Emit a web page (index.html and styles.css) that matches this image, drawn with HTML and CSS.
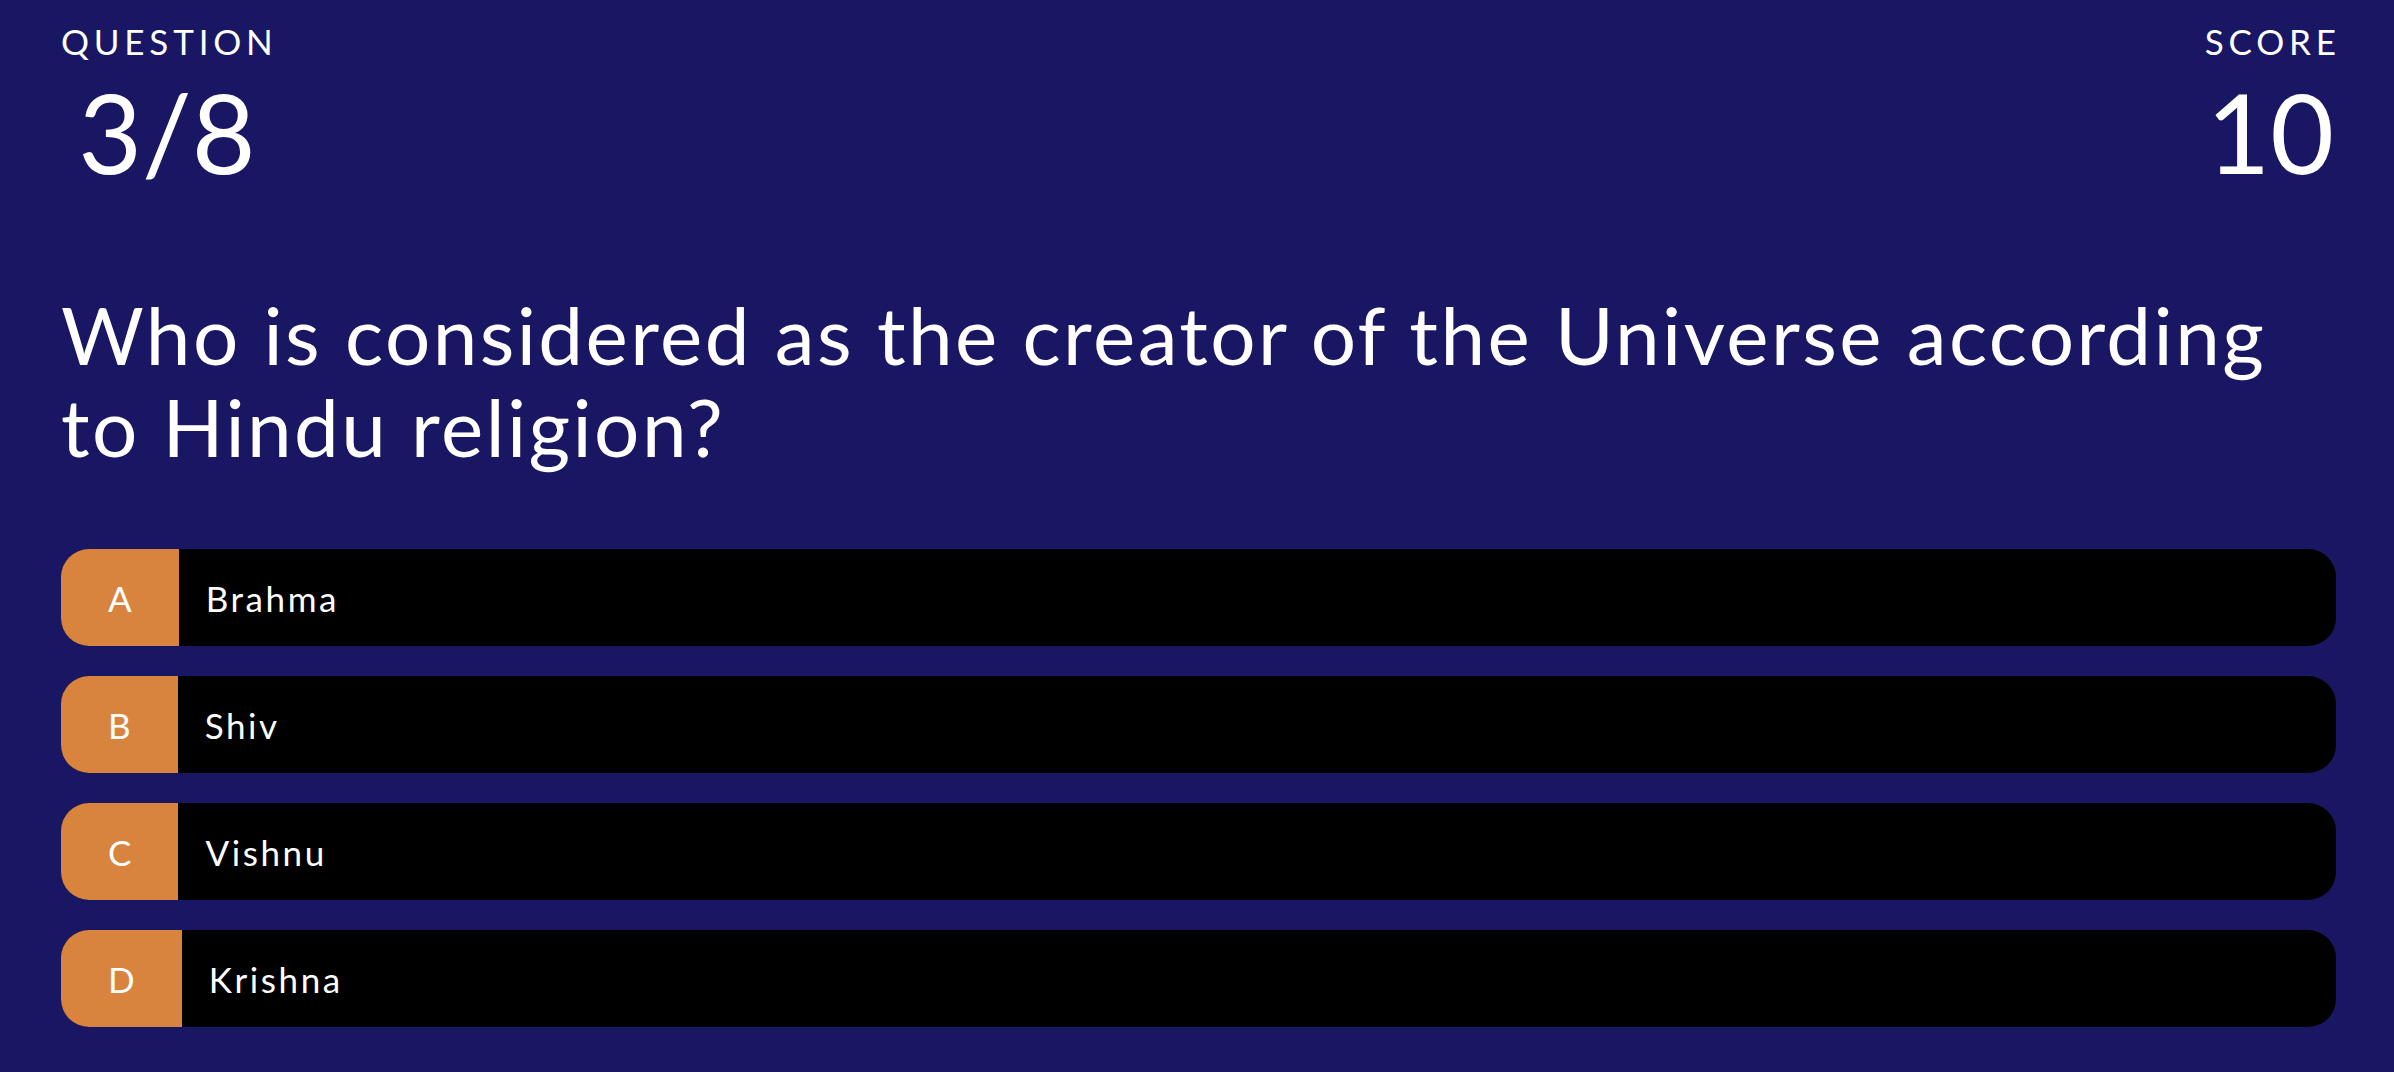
FILE: index.html
```html
<!DOCTYPE html>
<html lang="en">
<head>
<meta charset="utf-8">
<title>Quiz</title>
<link rel="stylesheet" href="styles.css">
</head>
<body>
<main class="page">
  <header class="top">
    <div class="stat">
      <div class="stat-label">QUESTION</div>
      <div class="stat-value">3/8</div>
    </div>
    <div class="stat">
      <div class="stat-label">SCORE</div>
      <div class="stat-value">10</div>
    </div>
  </header>
  <h1 class="question">Who is considered as the creator of the Universe according to Hindu religion?</h1>
  <ul class="options">
    <li class="option"><span class="letter">A</span><span class="answer">Brahma</span></li>
    <li class="option"><span class="letter">B</span><span class="answer">Shiv</span></li>
    <li class="option"><span class="letter">C</span><span class="answer">Vishnu</span></li>
    <li class="option"><span class="letter">D</span><span class="answer">Krishna</span></li>
  </ul>
</main>
</body>
</html>
```
FILE: styles.css
```css
* { box-sizing: border-box; }
html, body {
  margin: 0;
  padding: 0;
  background: #191763;
  height: 100%;
}
body {
  font-family: Lato, "Open Sans", sans-serif;
  color: #ffffff;
}
.page {
  padding: 20px 58px 0 61px;
}
.top {
  display: flex;
  justify-content: space-between;
  align-items: flex-start;
}
.stat {
  display: flex;
  flex-direction: column;
  align-items: center;
}
.stat-label {
  font-size: 35px;
  line-height: 42px;
  letter-spacing: 4.8px;
  margin-right: -4.8px;
}
.stat-value {
  font-size: 110px;
  line-height: 110px;
  margin-top: 14px;
}
.question {
  margin: 102px 0 0 0;
  font-weight: 400;
  font-size: 80px;
  line-height: 92px;
  letter-spacing: 2.4px;
}
.options {
  list-style: none;
  margin: 77px 0 0 0;
  padding: 0;
  display: flex;
  flex-direction: column;
  gap: 30px;
}
.option {
  display: flex;
  align-items: center;
  height: 97px;
  background: #000000;
  border-radius: 28px;
  overflow: hidden;
}
.letter {
  align-self: stretch;
  display: flex;
  align-items: center;
  justify-content: center;
  background: #d9843e;
  padding: 0 47px;
  font-size: 35px;
}
.answer {
  padding-left: 27px;
  font-size: 35px;
  letter-spacing: 2.6px;
}
```
